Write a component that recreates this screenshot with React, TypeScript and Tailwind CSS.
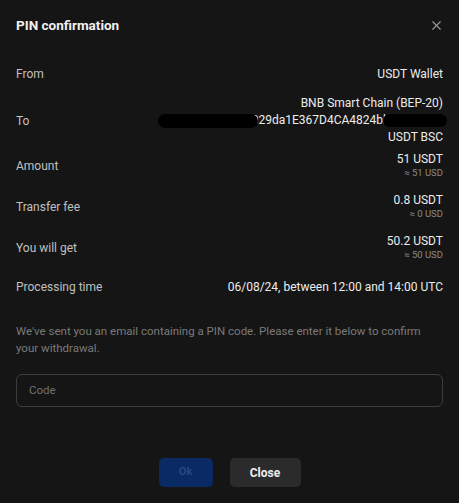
import { X } from "lucide-react";

const Row = ({ label, value, sub }: { label: string; value: string; sub?: string }) => (
  <div className="flex items-center justify-between">
    <span className="text-[12px] text-[#c0c0c0] mt-[2px]">{label}</span>
    <div className="flex flex-col items-end">
      <span className="text-[12px] leading-[16px] text-[#ececec]">{value}</span>
      {sub && <span className="text-[9.5px] leading-[12px] text-[#8a8a8a]">{sub}</span>}
    </div>
  </div>
);

export default function App() {
  return (
    <div
      className="w-[459px] h-[503px] bg-[#151515] flex flex-col overflow-hidden"
      style={{ fontFamily: "Roboto, 'Noto Sans', sans-serif" }}
    >
      {/* Header */}
      <div className="flex items-center justify-between pl-4 pr-[15px] pt-4 h-[34px]">
        <h2 className="text-[13.5px] font-bold text-[#f0f0f0] leading-[18px]">PIN confirmation</h2>
        <X className="w-[15px] h-[15px] text-[#9a9a9a]" strokeWidth={1.8} />
      </div>

      {/* Details */}
      <div className="flex flex-col px-4 pt-[31px]">
        <div className="flex items-center justify-between h-[17px]">
          <span className="text-[12px] text-[#c0c0c0]">From</span>
          <span className="text-[12px] text-[#ececec]">USDT Wallet</span>
        </div>

        <div className="flex items-center justify-between mt-[13px]">
          <span className="text-[12px] text-[#c0c0c0]">To</span>
          <div className="flex flex-col items-end text-[12px] leading-[17px] text-[#ececec]">
            <span>BNB Smart Chain (BEP-20)</span>
            <div className="flex items-center -mr-[4px]">
              <span className="block w-[100px] h-[14px] bg-black rounded-full -mr-[6px] relative" />
              <span>029da1E367D4CA4824bl</span>
              <span className="block w-[64px] h-[13px] bg-black rounded-full -ml-[3px]" />
            </div>
            <span>USDT BSC</span>
          </div>
        </div>

        <div className="mt-[5px]">
          <Row label="Amount" value="51 USDT" sub="≈ 51 USD" />
        </div>
        <div className="mt-[13px]">
          <Row label="Transfer fee" value="0.8 USDT" sub="≈ 0 USD" />
        </div>
        <div className="mt-[13px]">
          <Row label="You will get" value="50.2 USDT" sub="≈ 50 USD" />
        </div>
        <div className="mt-[18px] flex items-center justify-between h-[16px]">
          <span className="text-[12px] text-[#c0c0c0]">Processing time</span>
          <span className="text-[12px] text-[#ececec]">06/08/24, between 12:00 and 14:00 UTC</span>
        </div>

        <p className="mt-[28px] text-[11.5px] leading-[17px] text-[#7a7a7a] pr-[18px]">
          We've sent you an email containing a PIN code. Please enter it below to confirm your withdrawal.
        </p>

        <div className="mt-[17px] h-[33px] rounded-[6px] border border-[#3d3d3d] flex items-center px-3">
          <span className="text-[11.5px] text-[#707070]">Code</span>
        </div>
      </div>

      {/* Footer */}
      <div className="flex justify-center gap-[17px] mt-[51px]">
        <button className="w-[54px] h-[29px] rounded-[5px] bg-[#0a2a64] text-[11px] text-[#274a85] font-semibold">
          Ok
        </button>
        <button className="w-[71px] h-[29px] rounded-[5px] bg-[#2b2b2b] text-[12px] text-[#eeeeee] font-bold">
          Close
        </button>
      </div>
    </div>
  );
}
